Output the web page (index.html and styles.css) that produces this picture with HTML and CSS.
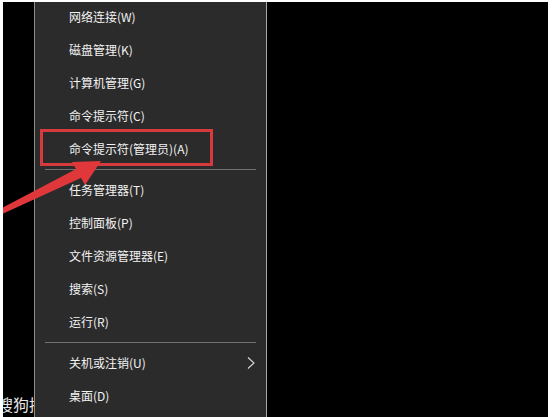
FILE: index.html
```html
<!DOCTYPE html>
<html lang="zh-CN">
<head>
<meta charset="UTF-8">
<meta name="viewport" content="width=device-width, initial-scale=1.0">
<title>Win+X 菜单</title>
<link rel="stylesheet" href="styles.css">
</head>
<body>

<div class="screen">
  <div class="watermark">搜狗拼音</div>

  <ul class="menu">
    <li class="item">网络连接(W)</li>
    <li class="item">磁盘管理(K)</li>
    <li class="item">计算机管理(G)</li>
    <li class="item">命令提示符(C)</li>
    <li class="item">命令提示符(管理员)(A)</li>
    <li class="sep"></li>
    <li class="item">任务管理器(T)</li>
    <li class="item">控制面板(P)</li>
    <li class="item">文件资源管理器(E)</li>
    <li class="item">搜索(S)</li>
    <li class="item">运行(R)</li>
    <li class="sep"></li>
    <li class="item">关机或注销(U)
      <svg class="chevron" width="8" height="12" viewBox="0 0 8 12">
        <path d="M1 0.5 L7 6 L1 11.5" fill="none" stroke="#d8d8d8" stroke-width="1.1"/>
      </svg>
    </li>
    <li class="item">桌面(D)</li>
  </ul>

  <!-- annotation: red box + arrow -->
  <div class="highlight"></div>
  <svg class="arrow" width="110" height="220" viewBox="0 0 110 220">
    <polygon points="0,209 78,168 83,177 0,215" fill="#e0383a"/>
    <polygon points="101,161 72,162 85,185" fill="#e0383a"/>
  </svg>

  <div class="frame"></div>
</div>

</body>
</html>
```

FILE: styles.css
```css
body {
  margin: 0;
  background-color: #000;
  font-family: "Noto Sans CJK SC", "Microsoft YaHei", sans-serif;
  overflow: hidden;
}

.screen {
  position: relative;
  width: 552px;
  height: 417px;
  display: flex;
  background-color: #000;
  overflow: hidden;
}

.menu {
  position: relative;
  z-index: 1;
  list-style: none;
  margin: 0 0 0 34px;
  padding: 0;
  width: 233px;
  height: 417px;
  box-sizing: border-box;
  background-color: #2b2b2b;
  border-left: 1px solid #8e8e8e;
  border-right: 1px solid #a8a8a8;
}

.item {
  height: 33px;
  display: flex;
  align-items: center;
  justify-content: space-between;
  padding: 0 11px 0 34px;
  font-size: 12px;
  color: #f2f2f2;
  white-space: nowrap;
}

.sep {
  height: 8px;
  display: flex;
  align-items: center;
  padding: 0 10px;
}

.sep::after {
  content: "";
  flex: 1;
  height: 1px;
  background-color: #707070;
}

.chevron {
  display: block;
}

.watermark {
  position: absolute;
  left: -3px;
  bottom: 1px;
  font-size: 16px;
  color: #e6e6e6;
  white-space: nowrap;
}

.highlight {
  position: absolute;
  z-index: 2;
  left: 40px;
  top: 129px;
  width: 167px;
  height: 31px;
  border: 3px solid #d63a3c;
}

.arrow {
  position: absolute;
  z-index: 2;
  left: 0;
  top: 0;
}

.frame {
  position: absolute;
  z-index: 3;
  inset: 0;
  border-top: 2px solid #fff;
  border-left: 3px solid #fff;
  border-right: 4px solid #fff;
  pointer-events: none;
}
```
